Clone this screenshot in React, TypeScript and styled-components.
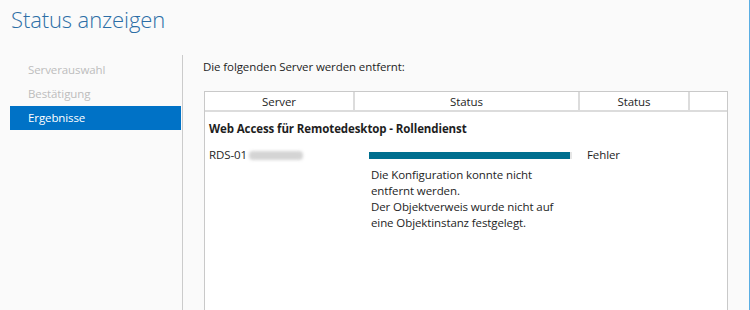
import React from 'react';
import styled, { createGlobalStyle } from 'styled-components';

const GlobalStyle = createGlobalStyle`
  html, body {
    margin: 0;
    padding: 0;
    background: #fafafa;
  }
  body {
    font-family: 'Open Sans', 'Noto Sans', 'Liberation Sans', sans-serif;
    font-size: 11.5px;
    letter-spacing: -0.1px;
    color: #1e1e1e;
  }
`;

const Page = styled.div`
  width: 750px;
  height: 310px;
  overflow: hidden;
  display: flex;
  flex-direction: column;
  box-sizing: border-box;
  border-right: 1px solid #5aaee3;
`;

const Title = styled.h1`
  margin: 0;
  padding: 4px 0 0 11px;
  height: 55px;
  box-sizing: border-box;
  font-weight: 300;
  font-size: 22px;
  color: #2c6ea6;
  letter-spacing: -0.1px;
`;

const Body = styled.div`
  flex: 1;
  display: flex;
  min-height: 0;
`;

const Nav = styled.nav`
  width: 172px;
  margin-left: 10px;
  padding-top: 3px;
  border-right: 1px solid #cbcbcb;
  box-sizing: content-box;
`;

const NavItem = styled.div<{ $active?: boolean }>`
  height: 24px;
  line-height: 24px;
  padding-left: 18px;
  width: 171px;
  box-sizing: border-box;
  color: ${p => (p.$active ? '#ffffff' : '#bdbdbd')};
  background: ${p => (p.$active ? '#0072c6' : 'transparent')};
`;

const Content = styled.div`
  flex: 1;
  display: flex;
  flex-direction: column;
  padding: 0 21px 0 20px;
`;

const Intro = styled.p`
  margin: 0;
  height: 36px;
  line-height: 18px;
  padding-top: 3px;
  box-sizing: border-box;
`;

const Table = styled.div`
  flex: 1;
  background: #ffffff;
  border: 1px solid #c9c9c9;
  border-bottom: none;
  margin-left: 1px;
`;

const HeaderRow = styled.div`
  display: grid;
  grid-template-columns: 150px 225px 110px 1fr;
  height: 18px;
  border-bottom: 2px solid #dcdcdc;
`;

const HeaderCell = styled.div`
  text-align: center;
  line-height: 19px;
  border-right: 2px solid #dcdcdc;
  &:last-child {
    border-right: none;
  }
`;

const Group = styled.div`
  font-weight: 700;
  padding: 8px 0 0 4px;
  height: 30px;
  box-sizing: border-box;
  line-height: 18px;
`;

const Row = styled.div`
  display: grid;
  grid-template-columns: 160px 214px 1fr;
  align-items: start;
  padding-left: 4px;
  padding-top: 5px;
`;

const ServerName = styled.div`
  line-height: 16px;
  display: flex;
  align-items: center;
`;

const Blurred = styled.span`
  display: inline-block;
  width: 54px;
  height: 9px;
  margin-left: 2px;
  background: #d4d4d4;
  border-radius: 4px;
  filter: blur(1.8px);
`;

const StatusCell = styled.div`
  display: flex;
  flex-direction: column;
`;

const Progress = styled.div`
  width: 203px;
  height: 7px;
  margin-top: 5px;
  background: #e6e6e6;
  display: flex;
`;

const ProgressFill = styled.div`
  background: #006f8f;
  height: 100%;
`;

const Message = styled.div`
  margin-top: 8px;
  padding-left: 2px;
  line-height: 16px;
`;

const Result = styled.div`
  line-height: 16px;
  padding-left: 4px;
`;

const App: React.FC = () => (
  <>
    <GlobalStyle />
    <Page>
      <Title>Status anzeigen</Title>
      <Body>
        <Nav>
          <NavItem>Serverauswahl</NavItem>
          <NavItem>Bestätigung</NavItem>
          <NavItem $active>Ergebnisse</NavItem>
        </Nav>
        <Content>
          <Intro>Die folgenden Server werden entfernt:</Intro>
          <Table>
            <HeaderRow>
              <HeaderCell>Server</HeaderCell>
              <HeaderCell>Status</HeaderCell>
              <HeaderCell>Status</HeaderCell>
              <HeaderCell />
            </HeaderRow>
            <Group>Web Access für Remotedesktop - Rollendienst</Group>
            <Row>
              <ServerName>
                RDS-01
                <Blurred />
              </ServerName>
              <StatusCell>
                <Progress>
                  <ProgressFill style={{ width: '99%' }} />
                </Progress>
                <Message>
                  Die Konfiguration konnte nicht
                  <br />
                  entfernt werden.
                  <br />
                  Der Objektverweis wurde nicht auf
                  <br />
                  eine Objektinstanz festgelegt.
                </Message>
              </StatusCell>
              <Result>Fehler</Result>
            </Row>
          </Table>
        </Content>
      </Body>
    </Page>
  </>
);

export default App;
